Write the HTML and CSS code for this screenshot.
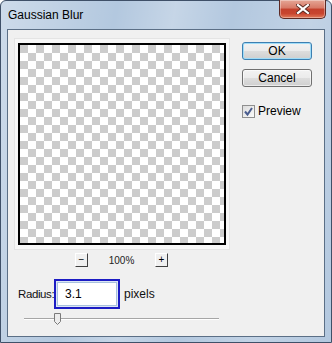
FILE: index.html
```html
<!DOCTYPE html>
<html lang="en">
<head>
  <meta charset="UTF-8">
  <title>Gaussian Blur</title>
  <link rel="stylesheet" href="styles.css">
</head>
<body>
  <div class="window">
    <div class="titlebar">
      <span class="title">Gaussian Blur</span>
      <button class="close-btn" aria-label="Close">
        <svg width="14" height="10" viewBox="0 0 14 10">
          <path d="M2 1 L12 9 M12 1 L2 9" stroke="#5a2a22" stroke-width="4" stroke-linecap="square"/>
          <path d="M2 1 L12 9 M12 1 L2 9" stroke="#fff" stroke-width="2.2" stroke-linecap="square"/>
        </svg>
      </button>
    </div>
    <div class="client">
      <div class="left-col">
        <div class="preview">
          <div class="checker"></div>
        </div>
        <div class="zoom-row">
          <button class="zoom-btn">&minus;</button>
          <span class="zoom-value">100%</span>
          <button class="zoom-btn">+</button>
        </div>
        <div class="radius-row">
          <label for="radius">Radius:</label>
          <div class="input-focus">
            <input id="radius" type="text" value="3.1">
          </div>
          <span class="unit">pixels</span>
        </div>
        <div class="slider">
          <div class="track"></div>
          <svg class="thumb" width="9" height="12" viewBox="0 0 9 12">
            <path d="M1.5 0.5 H7.5 V8.5 L4.5 11.5 L1.5 8.5 Z" fill="#ececec" stroke="#7a7a7a"/>
          </svg>
        </div>
      </div>
      <div class="right-col">
        <button class="btn btn-default">OK</button>
        <button class="btn">Cancel</button>
        <label class="check">
          <span class="box">
            <svg width="11" height="11" viewBox="0 0 11 11">
              <path d="M2 5.5 L4.5 8.5 L9 2" fill="none" stroke="#4a5d8f" stroke-width="2"/>
            </svg>
          </span>
          Preview
        </label>
      </div>
    </div>
  </div>
</body>
</html>
```

FILE: styles.css
```css
* { margin: 0; padding: 0; box-sizing: border-box; }
body {
  font-family: "Liberation Sans", Arial, sans-serif;
  font-size: 12px;
  color: #000;
  background: #fff;
}
.window {
  width: 332px;
  height: 343px;
  border: 1px solid #3f5068;
  border-radius: 6px 6px 0 0;
  padding: 0 6px 5px 6px;
  background:
    linear-gradient(100deg, rgba(255,255,255,0.35) 0%, rgba(255,255,255,0) 30%, rgba(255,255,255,0.25) 45%, rgba(255,255,255,0) 60%, rgba(255,255,255,0.2) 80%, rgba(255,255,255,0) 100%),
    #b3c8df;
  display: flex;
  flex-direction: column;
}
.titlebar {
  height: 28px;
  display: flex;
  align-items: flex-start;
  justify-content: space-between;
}
.title {
  margin-top: 7px;
  margin-left: 1px;
  font-size: 12px;
  color: #000;
}
.close-btn {
  width: 47px;
  height: 19px;
  margin-top: -1px;
  margin-right: -1px;
  border: 1px solid #5d2a24;
  border-top: none;
  border-radius: 0 0 5px 5px;
  background: linear-gradient(#e5a696 0%, #d77966 45%, #c3402c 50%, #c8452f 75%, #e07a5a 100%);
  box-shadow: inset 0 0 0 1px rgba(255,255,255,0.35);
  display: flex;
  align-items: center;
  justify-content: center;
}
.client {
  flex: 1;
  border: 1px solid #5b6f86;
  background: #f0f0f0;
  display: flex;
  padding: 8px 0 0 6px;
}
.left-col {
  width: 216px;
}
.preview {
  width: 216px;
  height: 212px;
  padding: 5px 4px;
  background: #f7f7f7;
  border: 1px solid #e4e4e4;
}
.checker {
  width: 208px;
  height: 202px;
  margin: -1px 0 0 -1px;
  border: 2px solid #000;
  background: conic-gradient(#fff 25%, #ccc 0 50%, #fff 0 75%, #ccc 0);
  background-size: 16px 16px;
}
.zoom-row {
  display: flex;
  align-items: center;
  height: 14px;
  margin-top: 3px;
  padding-left: 61px;
}
.zoom-btn {
  width: 13px;
  height: 14px;
  font-family: "Liberation Sans", Arial, sans-serif;
  font-size: 10px;
  line-height: 12px;
  background: #f0f0f0;
  border: 1px solid;
  border-color: #fff #404040 #404040 #fff;
  color: #000;
}
.zoom-value {
  width: 67px;
  text-align: center;
  font-size: 10px;
  color: #222;
}
.radius-row {
  display: flex;
  align-items: center;
  margin-top: 12px;
  padding-left: 4px;
  height: 30px;
}
.radius-row label {
  flex: none;
  width: 36px;
  white-space: nowrap;
  font-size: 11.5px;
  letter-spacing: -0.4px;
  color: #111;
}
.input-focus {
  flex: none;
  width: 66px;
  height: 30px;
  border: 2px solid #1c1cc4;
  padding: 1px;
  background: #dce6f3;
}
.input-focus input {
  width: 100%;
  height: 100%;
  border: 1px solid #a8c1de;
  background: #fff;
  font-family: "Liberation Sans", Arial, sans-serif;
  font-size: 12px;
  padding-left: 7px;
  outline: none;
}
.unit {
  margin-left: 4px;
  color: #111;
}
.slider {
  position: relative;
  height: 14px;
  margin-top: 4px;
}
.track {
  position: absolute;
  left: 10px;
  top: 5px;
  width: 195px;
  height: 2px;
  border-top: 1px solid #a6a6a6;
  border-bottom: 1px solid #fff;
}
.thumb {
  position: absolute;
  left: 39px;
  top: 0;
}
.right-col {
  display: flex;
  flex-direction: column;
  margin-left: 12px;
  margin-top: 4px;
  width: 70px;
}
.btn {
  width: 70px;
  height: 18px;
  font-family: "Liberation Sans", Arial, sans-serif;
  font-size: 12px;
  border: 1px solid #707070;
  border-radius: 3px;
  background: linear-gradient(#f2f2f2 0%, #ebebeb 50%, #dddddd 51%, #cfcfcf 100%);
  box-shadow: inset 0 0 0 1px rgba(255,255,255,0.6);
  color: #000;
}
.btn-default {
  border-color: #3c7fb1;
  box-shadow: inset 0 0 0 1px #9fdcf8;
}
.btn + .btn {
  margin-top: 9px;
}
.check {
  display: flex;
  align-items: center;
  margin-top: 17px;
  height: 14px;
}
.box {
  width: 13px;
  height: 13px;
  border: 1px solid #8f8f8f;
  background: linear-gradient(135deg, #dcdcdc, #fbfbfb);
  margin-right: 3px;
  display: flex;
  align-items: center;
  justify-content: center;
}
```
